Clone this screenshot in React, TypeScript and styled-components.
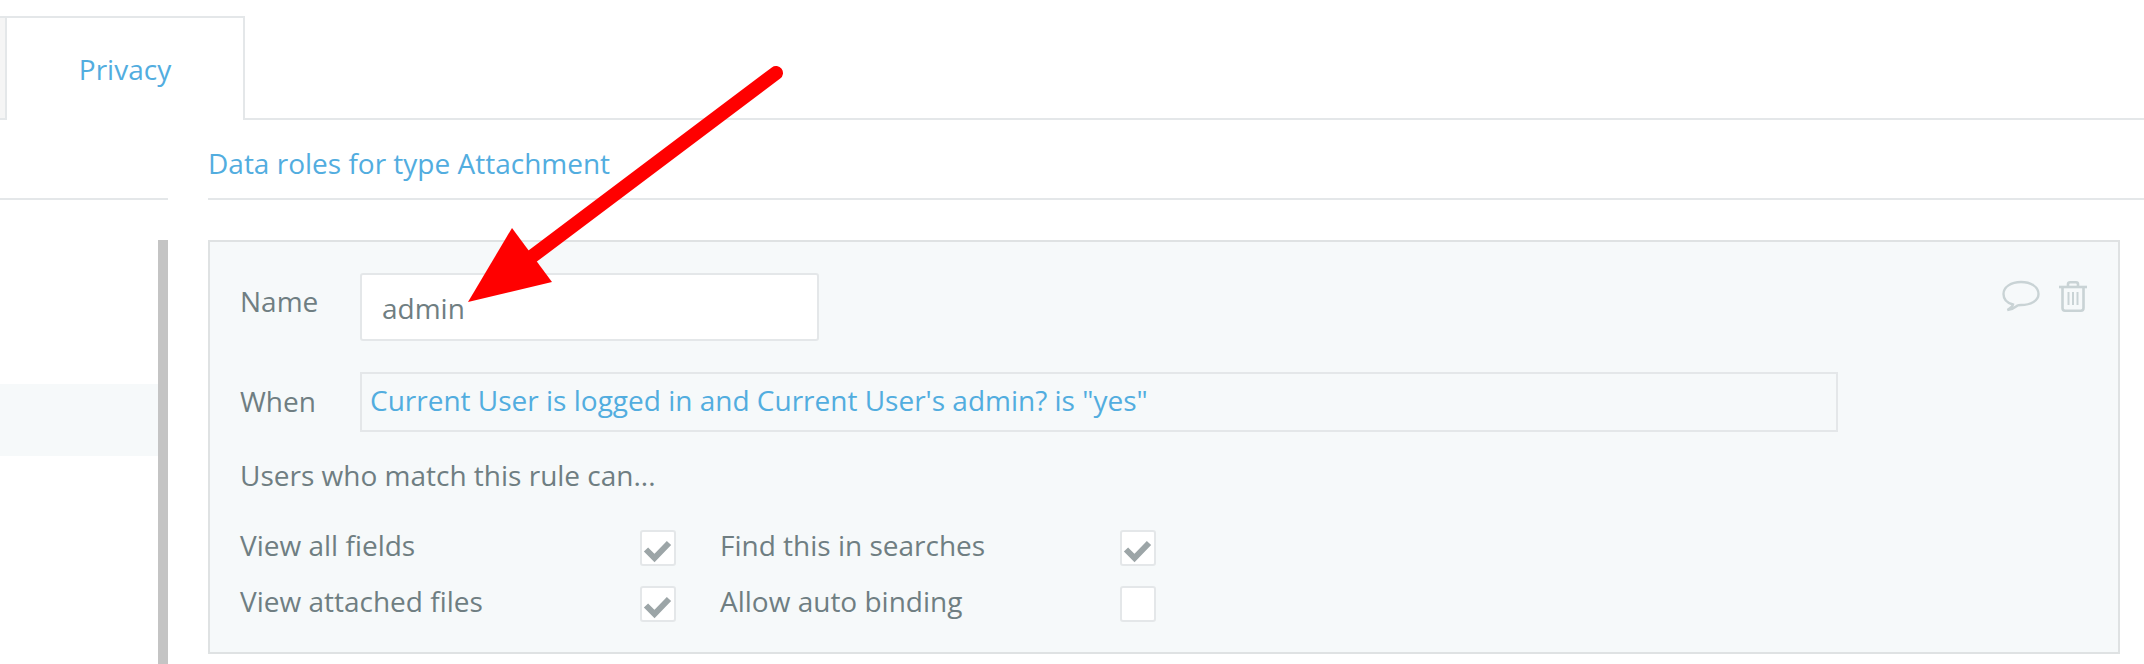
import styled, { createGlobalStyle } from "styled-components";

const GlobalStyle = createGlobalStyle`
  html, body {
    margin: 0;
    background: #ffffff;
  }
  body {
    font-family: "Open Sans", "Noto Sans", sans-serif;
    font-size: 28px;
    color: #6f7e82;
  }
`;

const permissions = [
  { label: "View all fields", checked: true },
  { label: "Find this in searches", checked: true },
  { label: "View attached files", checked: true },
  { label: "Allow auto binding", checked: false },
];

export default function App() {
  return (
    <>
      <GlobalStyle />
      <Page>
        <TabBar>
          <InactiveTab />
          <ActiveTab>Privacy</ActiveTab>
        </TabBar>
        <Body>
          <Sidebar>
            <SidebarHeader />
            <SidebarList>
              <SidebarItems>
                <SidebarItem />
              </SidebarItems>
              <Scrollbar />
            </SidebarList>
          </Sidebar>
          <Main>
            <Title>Data roles for type Attachment</Title>
            <RolePanel>
              <NameRow>
                <FieldLabel $top={10}>Name</FieldLabel>
                <NameInput>admin</NameInput>
                <PanelIcons>
                  <svg width="38" height="32" viewBox="0 0 38 32" fill="none" stroke="#c9d3d5" strokeWidth="2.4">
                    <path d="M11 24.5 C5 23 1.5 19 1.5 14 C1.5 7 9 2 19 2 C29 2 36.5 7 36.5 14 C36.5 20.5 29 25 19 25 C17.5 25 16.5 25 15.5 25.5 C13 27.5 11 29.5 5.5 30 C8.5 28 10.5 26.5 11 24.5 Z" />
                  </svg>
                  <svg width="28" height="31" viewBox="0 0 28 31" fill="none" stroke="#c9d3d5" strokeWidth="2.6">
                    <path d="M0 6 H28" />
                    <path d="M9 6 V3 Q9 1.3 11 1.3 H17 Q19 1.3 19 3 V6" />
                    <path d="M3.5 6 V27 Q3.5 29.7 6 29.7 H22 Q24.5 29.7 24.5 27 V6" />
                    <path d="M9.5 11 V24 M14 11 V24 M18.5 11 V24" strokeWidth="2" />
                  </svg>
                </PanelIcons>
              </NameRow>
              <WhenRow>
                <FieldLabel $top={11}>When</FieldLabel>
                <Condition>Current User is logged in and Current User's admin? is "yes"</Condition>
              </WhenRow>
              <RuleIntro>Users who match this rule can...</RuleIntro>
              <PermissionGrid>
                {permissions.map((p) => (
                  <Permission key={p.label}>
                    <PermissionLabel>{p.label}</PermissionLabel>
                    <Checkbox>
                      {p.checked && (
                        <svg width="32" height="31" viewBox="0 0 32 31" fill="none" stroke="#9ca5a7" strokeWidth="6">
                          <path d="M4 16.5 L12.5 25 L27 10" />
                        </svg>
                      )}
                    </Checkbox>
                  </Permission>
                ))}
              </PermissionGrid>
            </RolePanel>
          </Main>
        </Body>
        <Arrow width="2144" height="664" viewBox="0 0 2144 664">
          <path d="M776 73 L530 258" stroke="#ff0000" strokeWidth="14" strokeLinecap="round" fill="none" />
          <polygon points="512,228 552,282 468,302" fill="#ff0000" />
        </Arrow>
      </Page>
    </>
  );
}

const Page = styled.div`
  position: relative;
  width: 2144px;
  height: 664px;
  overflow: hidden;
  line-height: 36px;
  font-weight: 400;
`;

const TabBar = styled.div`
  display: flex;
  align-items: stretch;
  height: 102px;
  padding-top: 16px;
  border-bottom: 2px solid #e4e7e9;
`;

const InactiveTab = styled.div`
  width: 7px;
  box-sizing: border-box;
  background: #f5f5f5;
  border-top: 2px solid #e4e7e9;
  border-right: 2px solid #e4e7e9;
`;

const ActiveTab = styled.div`
  width: 238px;
  height: 104px;
  box-sizing: border-box;
  padding-top: 33px;
  text-align: center;
  color: #52addf;
  background: #ffffff;
  border: 2px solid #e4e7e9;
  border-left: none;
  border-bottom: none;
`;

const Body = styled.div`
  display: flex;
  height: 544px;
`;

const Sidebar = styled.div`
  display: flex;
  flex-direction: column;
  flex: 0 0 168px;
`;

const SidebarHeader = styled.div`
  height: 80px;
  box-sizing: border-box;
  border-bottom: 2px solid #e4e7e9;
`;

const SidebarList = styled.div`
  display: flex;
  flex: 1;
  margin-top: 40px;
`;

const SidebarItems = styled.div`
  flex: 1;
  padding-top: 144px;
`;

const SidebarItem = styled.div`
  height: 72px;
  background: #f6f9fa;
`;

const Scrollbar = styled.div`
  flex: 0 0 10px;
  background: #c4c4c4;
`;

const Main = styled.div`
  flex: 1;
  padding-left: 40px;
`;

const Title = styled.div`
  height: 80px;
  padding-top: 25px;
  box-sizing: border-box;
  color: #52addf;
  border-bottom: 2px solid #e4e7e9;
`;

const RolePanel = styled.div`
  width: 1912px;
  height: 414px;
  margin-top: 40px;
  box-sizing: border-box;
  padding: 31px 30px 0 30px;
  background: #f6f9fa;
  border: 2px solid #dfe2e3;
`;

const NameRow = styled.div`
  display: flex;
  align-items: flex-start;
`;

const FieldLabel = styled.div<{ $top: number }>`
  flex: 0 0 120px;
  padding-top: ${(p) => p.$top}px;
`;

const NameInput = styled.div`
  width: 459px;
  height: 68px;
  box-sizing: border-box;
  padding: 15px 0 0 20px;
  background: #ffffff;
  border: 2px solid #e4e7e9;
  border-radius: 3px;
`;

const PanelIcons = styled.div`
  display: flex;
  align-items: center;
  gap: 19px;
  margin-left: auto;
  margin-right: 1px;
  margin-top: 7px;
`;

const WhenRow = styled.div`
  display: flex;
  align-items: flex-start;
  margin-top: 31px;
`;

const Condition = styled.div`
  width: 1478px;
  height: 60px;
  box-sizing: border-box;
  padding: 8px 0 0 8px;
  color: #52addf;
  border: 2px solid #e4e7e9;
`;

const RuleIntro = styled.div`
  margin-top: 25px;
`;

const PermissionGrid = styled.div`
  display: grid;
  grid-template-columns: 400px 436px;
  column-gap: 80px;
  row-gap: 21px;
  width: 916px;
  margin-top: 34px;
`;

const Permission = styled.div`
  display: grid;
  grid-template-columns: 1fr 36px;
  align-items: center;
  width: 436px;
  height: 35px;
`;

const PermissionLabel = styled.span`
  padding-bottom: 6px;
`;

const Checkbox = styled.div`
  display: flex;
  align-items: center;
  justify-content: center;
  width: 36px;
  height: 36px;
  box-sizing: border-box;
  background: #ffffff;
  border: 2px solid #e4e7e9;
  border-radius: 3px;
`;

const Arrow = styled.svg`
  position: absolute;
  top: 0;
  left: 0;
  pointer-events: none;
`;
